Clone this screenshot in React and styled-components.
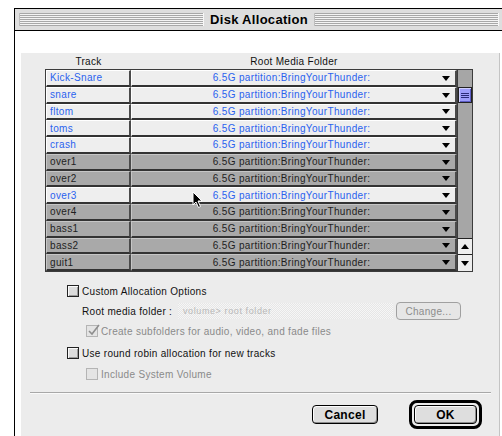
import React from "react";
import styled, { createGlobalStyle, css } from "styled-components";

const GlobalStyle = createGlobalStyle`
  html, body {
    margin: 0;
    padding: 0;
    background: #fff;
    overflow: hidden;
  }
  body {
    font-family: "Liberation Sans", Arial, sans-serif;
    font-size: 10px;
    color: #111;
  }
`;

const Page = styled.div`
  width: 502px;
  height: 436px;
  padding: 8px 0 0 14px;
  box-sizing: border-box;
  overflow: hidden;
`;

const Window = styled.div`
  width: 490px;
  height: 460px;
  border: 1px solid #000;
  background: #fff;
  box-sizing: border-box;
`;

const TitleBar = styled.div`
  height: 22px;
  border-bottom: 1px solid #000;
  background: #dedede;
  display: flex;
  align-items: center;
  padding: 0 4px;
  gap: 6px;
  box-sizing: border-box;
`;

const Stripes = styled.div`
  flex: 1;
  height: 13px;
  background: repeating-linear-gradient(
    to bottom,
    #a8a8a8 0 1px,
    #f4f4f4 1px 2px
  );
  border-left: 1px solid #bdbdbd;
  border-right: 1px solid #f8f8f8;
`;

const Title = styled.div`
  font-weight: bold;
  font-size: 13px;
  letter-spacing: 0.3px;
  color: #000;
`;

const WindowBody = styled.div`
  padding: 6px 0 0 6px;
`;

const Panel = styled.div`
  position: relative;
  width: 479px;
  height: 396px;
  background: #ececec;
  border-right: 1px solid #c4c4c4;
  border-bottom: 1px solid #c4c4c4;
  box-sizing: border-box;
`;

const HeaderRow = styled.div`
  display: flex;
  margin: 16px 0 0 25px;
  height: 16px;
  align-items: center;
  letter-spacing: 0.3px;
`;

const HeaderCell = styled.div`
  width: ${(p) => p.$w}px;
  text-align: center;
`;

const Table = styled.div`
  position: relative;
  display: flex;
  margin-left: 24px;
  width: 428px;
  border: 1px solid #3c3c3c;
  box-sizing: border-box;
  background: #3c3c3c;
`;

const Rows = styled.div`
  display: flex;
  flex-direction: column;
`;

const Row = styled.div`
  display: flex;
  height: 16.75px;
`;

const Cell = styled.div`
  box-sizing: border-box;
  height: 100%;
  width: ${(p) => p.$w}px;
  display: flex;
  align-items: center;
  letter-spacing: 0.35px;
  border-right: 2px solid #4a4a4a;
  border-bottom: 2px solid #333;
  ${(p) =>
    p.$on
      ? css`
          background: #eeeeee;
          color: #2a62ee;
          border-top: 1px solid #fff;
          border-left: 1px solid #fff;
        `
      : css`
          background: #a9a9a9;
          color: #1e1e1e;
          border-top: 1px solid #c6c6c6;
          border-left: 1px solid #c6c6c6;
        `}
`;

const TrackCell = styled(Cell)`
  padding-left: 3px;
`;

const FolderCell = styled(Cell)`
  justify-content: center;
  position: relative;
  padding-right: 4px;
`;

const DropArrow = styled.span`
  position: absolute;
  right: 5px;
  top: 50%;
  margin-top: -2px;
  width: 0;
  height: 0;
  border-left: 4px solid transparent;
  border-right: 4px solid transparent;
  border-top: 5px solid #000;
`;

const ScrollBar = styled.div`
  width: 15px;
  display: flex;
  flex-direction: column;
  background: #a6a6a6;
  border-left: 1px solid #3c3c3c;
  box-sizing: border-box;
`;

const Thumb = styled.div`
  margin-top: 17px;
  height: 16px;
  background: #9d9dfb;
  border: 1px solid #222;
  box-sizing: border-box;
  display: flex;
  flex-direction: column;
  justify-content: center;
  align-items: center;
  gap: 1px;
  box-shadow: inset 1px 1px #cfcfff, inset -1px -1px #5c5cc4;
`;

const Grip = styled.span`
  width: 8px;
  height: 1px;
  background: #2a2a7a;
`;

const Spacer = styled.div`
  flex: 1;
`;

const ArrowBox = styled.div`
  height: 16.75px;
  background: #eeeeee;
  border-top: 1px solid #222;
  box-sizing: border-box;
  display: flex;
  align-items: center;
  justify-content: center;
`;

const Tri = styled.span`
  width: 0;
  height: 0;
  border-left: 4px solid transparent;
  border-right: 4px solid transparent;
  ${(p) =>
    p.$up
      ? css`border-bottom: 5px solid #000;`
      : css`border-top: 5px solid #000;`}
`;

const Pointer = styled.svg`
  position: absolute;
  left: 146px;
  top: 121px;
`;

const Options = styled.div`
  margin: 9px 0 0 46px;
  display: flex;
  flex-direction: column;
`;

const OptionRow = styled.div`
  height: 20px;
  display: flex;
  align-items: center;
  gap: 3px;
  letter-spacing: 0.3px;
  margin-left: ${(p) => p.$indent || 0}px;
  margin-top: ${(p) => p.$mt || 0}px;
  color: ${(p) => (p.$off ? "#8a8a8a" : "#111")};
`;

const Box = styled.span`
  position: relative;
  width: 12px;
  height: 12px;
  box-sizing: border-box;
  flex-shrink: 0;
  ${(p) =>
    p.$off
      ? css`
          border: 1px solid #b4b4b4;
          background: #e4e4e4;
        `
      : css`
          border: 1px solid #222;
          background: #dcdcdc;
          box-shadow: inset 1px 1px #fafafa, inset -1px -1px #9a9a9a;
        `}
`;

const Check = styled.svg`
  position: absolute;
  left: 0;
  top: -2px;
`;

const FolderLabel = styled.span`
  margin-left: 15px;
  width: 93px;
`;

const PathField = styled.div`
  width: 215px;
  height: 16px;
  display: flex;
  align-items: center;
  padding-left: 5px;
  box-sizing: border-box;
  color: #b8b8b8;
  font-size: 9px;
  letter-spacing: 0.6px;
  background: repeating-conic-gradient(#f6f6f6 0 25%, #e6e6e6 0 50%) 0 0 / 2px 2px;
`;

const ChangeButton = styled.div`
  margin-left: 0;
  width: 65px;
  height: 18px;
  border: 1px solid #a0a0a0;
  border-radius: 4px;
  background: #e6e6e6;
  box-sizing: border-box;
  display: flex;
  align-items: center;
  justify-content: center;
  color: #8c8c8c;
  letter-spacing: 0.3px;
`;

const Divider = styled.div`
  margin: 8px 8px 0 9px;
  height: 1px;
  background: #a8a8a8;
  box-shadow: 0 1px #fafafa;
`;

const Footer = styled.div`
  display: flex;
  justify-content: flex-end;
  align-items: center;
  gap: 31px;
  margin: 7px 17px 0 0;
`;

const Button = styled.div`
  width: ${(p) => p.$w}px;
  height: 19px;
  box-sizing: border-box;
  border: 1px solid #000;
  border-radius: 4px;
  background: #dedede;
  box-shadow: inset 1px 1px #fcfcfc, inset -1px -1px #8c8c8c;
  display: flex;
  align-items: center;
  justify-content: center;
  font-weight: bold;
  font-size: 12px;
  letter-spacing: 0.3px;
  color: #000;
`;

const DefaultRing = styled.div`
  padding: 2px;
  border: 3px solid #000;
  border-radius: 8px;
  background: #ececec;
`;

const tracks = [
  ["Kick-Snare", true],
  ["snare", true],
  ["fltom", true],
  ["toms", true],
  ["crash", true],
  ["over1", false],
  ["over2", false],
  ["over3", true],
  ["over4", false],
  ["bass1", false],
  ["bass2", false],
  ["guit1", false],
];

function CheckBox({ off, checked }) {
  return (
    <Box $off={off}>
      {checked && (
        <Check width="13" height="13" viewBox="0 0 13 13">
          <path d="M2 7 L5 10 L12 1" fill="none" stroke="#8e8e8e" strokeWidth="1.6" />
        </Check>
      )}
    </Box>
  );
}

export default function App() {
  return (
    <Page>
      <GlobalStyle />
      <Window>
        <TitleBar>
          <Stripes />
          <Title>Disk Allocation</Title>
          <Stripes />
        </TitleBar>
        <WindowBody>
          <Panel>
            <HeaderRow>
              <HeaderCell $w={85}>Track</HeaderCell>
              <HeaderCell $w={326}>Root Media Folder</HeaderCell>
            </HeaderRow>
            <Table>
              <Rows>
                {tracks.map(([name, on]) => (
                  <Row key={name}>
                    <TrackCell $w={85} $on={on}>{name}</TrackCell>
                    <FolderCell $w={326} $on={on}>
                      6.5G partition:BringYourThunder:
                      <DropArrow />
                    </FolderCell>
                  </Row>
                ))}
              </Rows>
              <ScrollBar>
                <Thumb>
                  <Grip />
                  <Grip />
                  <Grip />
                </Thumb>
                <Spacer />
                <ArrowBox>
                  <Tri $up />
                </ArrowBox>
                <ArrowBox>
                  <Tri />
                </ArrowBox>
              </ScrollBar>
              <Pointer width="12" height="18" viewBox="0 0 12 18">
                <path
                  d="M1 1 L1 14 L4 11 L6.5 16.5 L8.5 15.5 L6 10 L10 10 Z"
                  fill="#000"
                  stroke="#fff"
                  strokeWidth="1"
                  strokeLinejoin="miter"
                />
              </Pointer>
            </Table>

            <Options>
              <OptionRow>
                <CheckBox />
                Custom Allocation Options
              </OptionRow>
              <OptionRow>
                <FolderLabel>Root media folder :</FolderLabel>
                <PathField>volume&gt; root folder</PathField>
                <ChangeButton>Change...</ChangeButton>
              </OptionRow>
              <OptionRow $indent={19} $off>
                <CheckBox off checked />
                Create subfolders for audio, video, and fade files
              </OptionRow>
              <OptionRow $mt={2}>
                <CheckBox />
                Use round robin allocation for new tracks
              </OptionRow>
              <OptionRow $indent={19} $mt={1} $off>
                <CheckBox off />
                Include System Volume
              </OptionRow>
            </Options>

            <Divider />
            <Footer>
              <Button $w={66}>Cancel</Button>
              <DefaultRing>
                <Button $w={63}>OK</Button>
              </DefaultRing>
            </Footer>
          </Panel>
        </WindowBody>
      </Window>
    </Page>
  );
}
